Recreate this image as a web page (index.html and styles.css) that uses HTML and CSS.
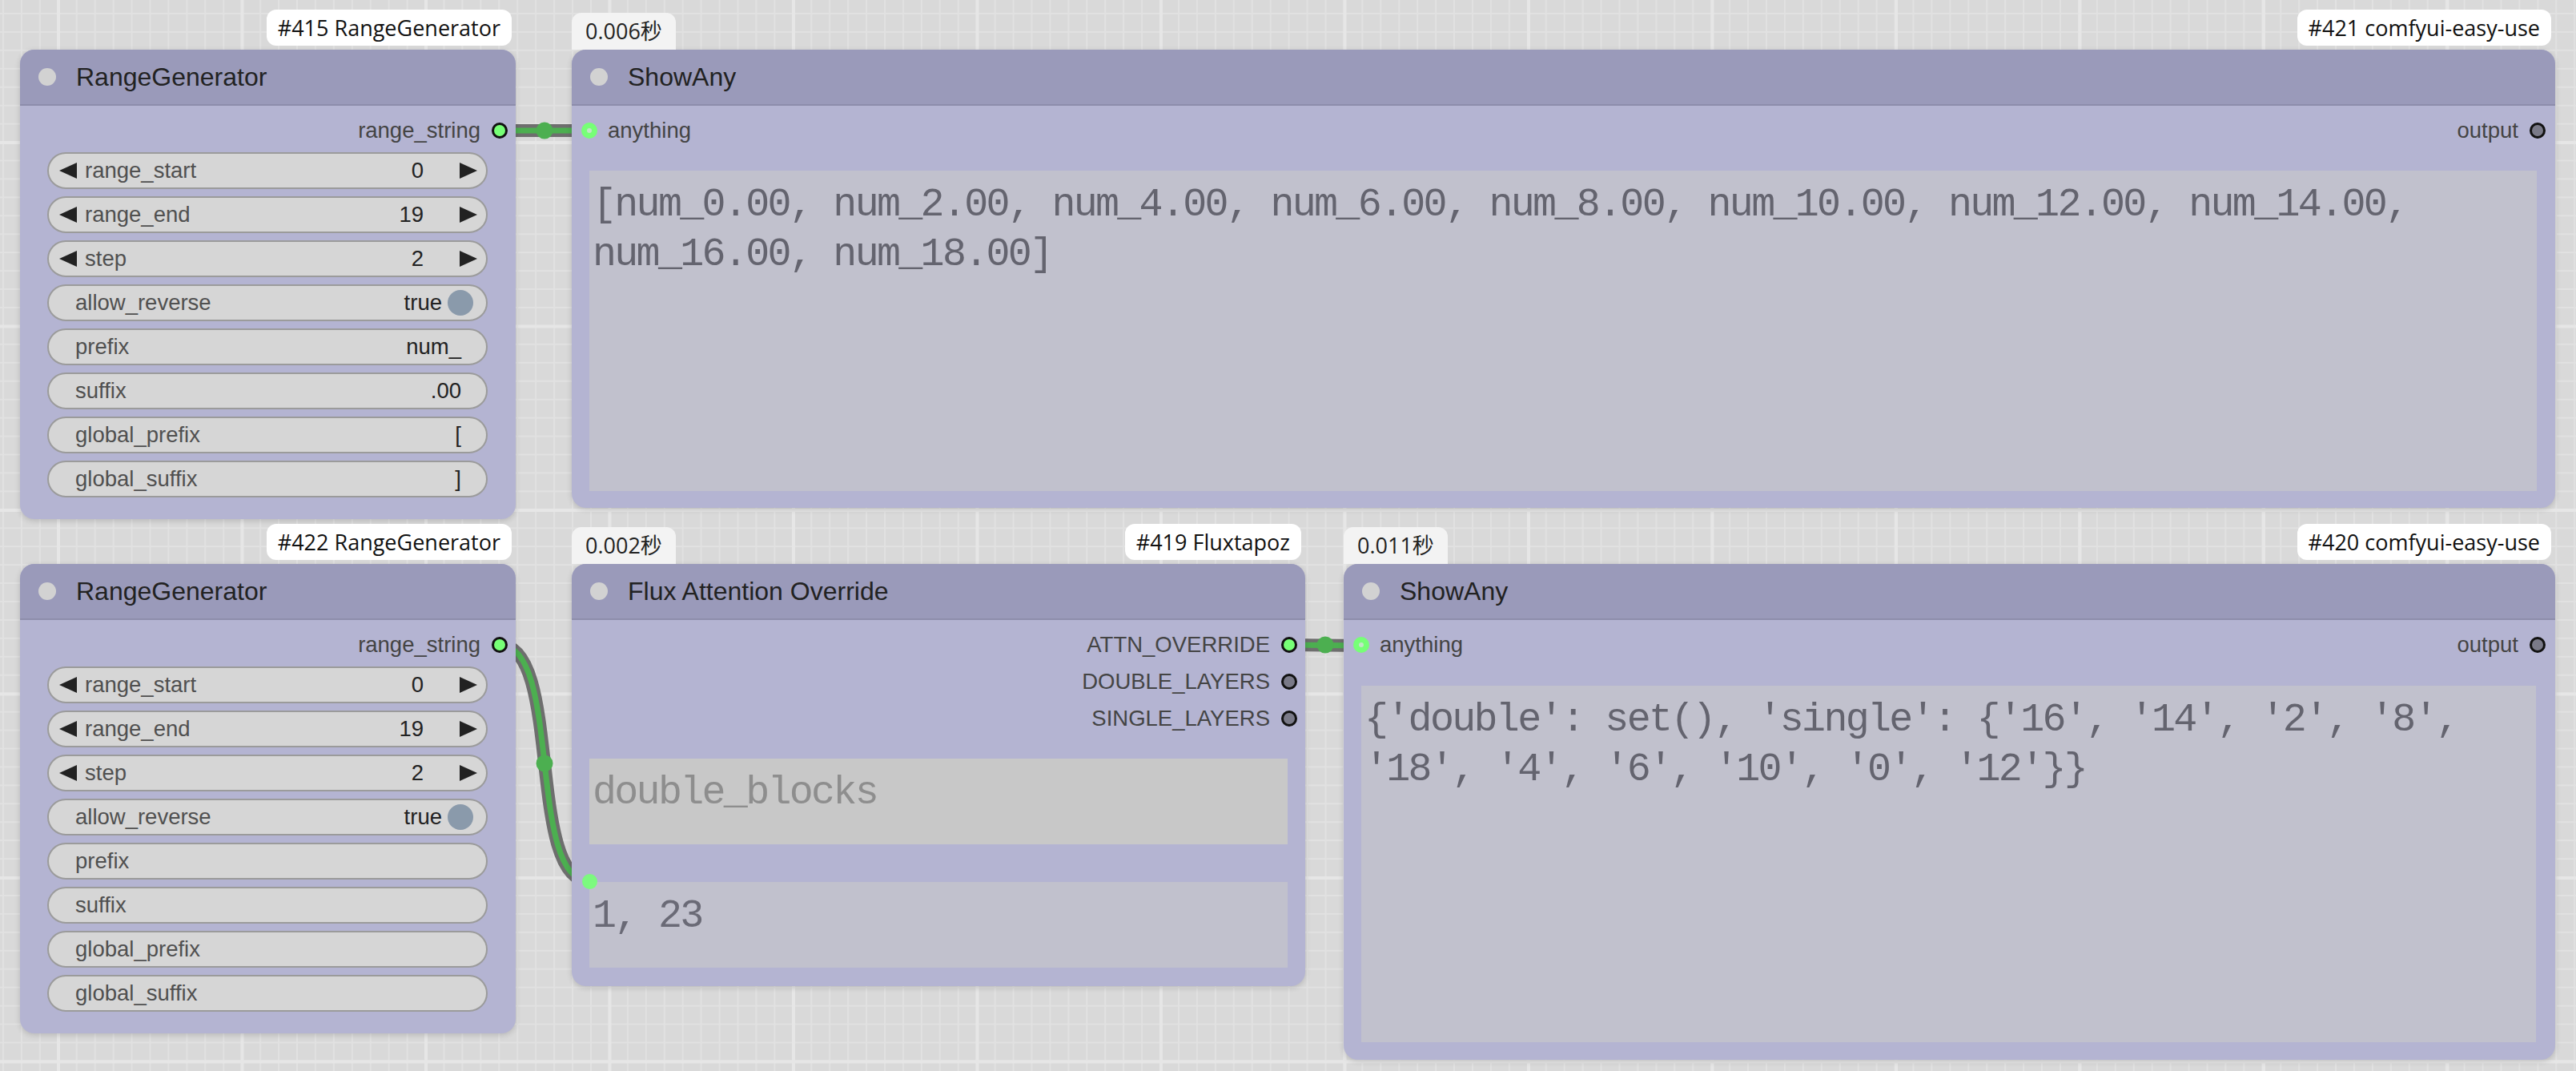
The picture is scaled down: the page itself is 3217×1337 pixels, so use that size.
FILE: index.html
```html
<!DOCTYPE html>
<html lang="en">
<head>
<meta charset="utf-8">
<title>ComfyUI canvas</title>
<link rel="stylesheet" href="styles.css">
</head>
<body>
<div class="canvas">
  <svg class="links" width="3217" height="1337" viewBox="0 0 3217 1337">
    <path class="link-outline" d="M624 163 L736 163"/>
    <path class="link-core" d="M624 163 L736 163"/>
    <circle class="link-dot" cx="680" cy="163" r="10.5"/>
    <path class="link-outline" d="M624 805 C703 805 657 1100 736 1100"/>
    <path class="link-core" d="M624 805 C703 805 657 1100 736 1100"/>
    <circle class="link-dot" cx="680" cy="953" r="10.5"/>
    <path class="link-outline" d="M1610 805 L1700 806"/>
    <path class="link-core" d="M1610 805 L1700 806"/>
    <circle class="link-dot" cx="1655" cy="805" r="10.5"/>
  </svg>

  <div class="node n415">
    <div class="badge id">#415 RangeGenerator</div>
    <div class="title"><span class="tdot"></span><span class="tname">RangeGenerator</span></div>
    <div class="body">
      <div class="slot out"><span class="slabel">range_string</span><i class="pin on"></i></div>
      <div class="widgets">
        <div class="w num"><i class="arr l"></i><span class="wl">range_start</span><span class="wv">0</span><i class="arr r"></i></div>
        <div class="w num"><i class="arr l"></i><span class="wl">range_end</span><span class="wv">19</span><i class="arr r"></i></div>
        <div class="w num"><i class="arr l"></i><span class="wl">step</span><span class="wv">2</span><i class="arr r"></i></div>
        <div class="w tog"><span class="wl">allow_reverse</span><span class="wv">true</span><i class="knob"></i></div>
        <div class="w txt"><span class="wl">prefix</span><span class="wv">num_</span></div>
        <div class="w txt"><span class="wl">suffix</span><span class="wv">.00</span></div>
        <div class="w txt"><span class="wl">global_prefix</span><span class="wv">[</span></div>
        <div class="w txt"><span class="wl">global_suffix</span><span class="wv">]</span></div>
      </div>
    </div>
  </div>

  <div class="node n421">
    <div class="badge time">0.006秒</div>
    <div class="badge id">#421 comfyui-easy-use</div>
    <div class="title"><span class="tdot"></span><span class="tname">ShowAny</span></div>
    <div class="body">
      <div class="slot io">
        <span class="in"><i class="pin ring"></i><span class="slabel">anything</span></span>
        <span class="outp"><span class="slabel">output</span><i class="pin off"></i></span>
      </div>
      <div class="ta show">[num_0.00, num_2.00, num_4.00, num_6.00, num_8.00, num_10.00, num_12.00, num_14.00, num_16.00, num_18.00]</div>
    </div>
  </div>

  <div class="node n422">
    <div class="badge id">#422 RangeGenerator</div>
    <div class="title"><span class="tdot"></span><span class="tname">RangeGenerator</span></div>
    <div class="body">
      <div class="slot out"><span class="slabel">range_string</span><i class="pin on"></i></div>
      <div class="widgets">
        <div class="w num"><i class="arr l"></i><span class="wl">range_start</span><span class="wv">0</span><i class="arr r"></i></div>
        <div class="w num"><i class="arr l"></i><span class="wl">range_end</span><span class="wv">19</span><i class="arr r"></i></div>
        <div class="w num"><i class="arr l"></i><span class="wl">step</span><span class="wv">2</span><i class="arr r"></i></div>
        <div class="w tog"><span class="wl">allow_reverse</span><span class="wv">true</span><i class="knob"></i></div>
        <div class="w txt"><span class="wl">prefix</span><span class="wv"></span></div>
        <div class="w txt"><span class="wl">suffix</span><span class="wv"></span></div>
        <div class="w txt"><span class="wl">global_prefix</span><span class="wv"></span></div>
        <div class="w txt"><span class="wl">global_suffix</span><span class="wv"></span></div>
      </div>
    </div>
  </div>

  <div class="node n419">
    <div class="badge time">0.002秒</div>
    <div class="badge id">#419 Fluxtapoz</div>
    <div class="title"><span class="tdot"></span><span class="tname">Flux Attention Override</span></div>
    <div class="body">
      <div class="slot out"><span class="slabel">ATTN_OVERRIDE</span><i class="pin on"></i></div>
      <div class="slot out"><span class="slabel">DOUBLE_LAYERS</span><i class="pin off"></i></div>
      <div class="slot out"><span class="slabel">SINGLE_LAYERS</span><i class="pin off"></i></div>
      <div class="ta ph first">double_blocks</div>
      <div class="ta second"><i class="wpin"></i>1, 23</div>
    </div>
  </div>

  <div class="node n420">
    <div class="badge time">0.011秒</div>
    <div class="badge id">#420 comfyui-easy-use</div>
    <div class="title"><span class="tdot"></span><span class="tname">ShowAny</span></div>
    <div class="body">
      <div class="slot io">
        <span class="in"><i class="pin ring"></i><span class="slabel">anything</span></span>
        <span class="outp"><span class="slabel">output</span><i class="pin off"></i></span>
      </div>
      <div class="ta show">{'double': set(), 'single': {'16', '14', '2', '8', '18', '4', '6', '10', '0', '12'}}</div>
    </div>
  </div>
</div>
</body>
</html>
```

FILE: styles.css
```css
html, body {
  margin: 0;
  padding: 0;
}

body {
  font-family: "Liberation Sans", Arial, sans-serif;
  background-color: #d9d9d9;
  background-image:
    linear-gradient(90deg, #e6e6e6 4px, transparent 4px),
    linear-gradient(180deg, #e6e6e6 4px, transparent 4px),
    linear-gradient(90deg, #e1e1e1 2px, transparent 2px),
    linear-gradient(180deg, #e1e1e1 2px, transparent 2px);
  background-size: 229.5px 229.5px, 229.5px 229.5px, 22.95px 22.95px, 22.95px 22.95px;
  background-position: 71px 176px, 71px 176px, 3px 16px, 3px 16px;
}

.canvas {
  position: relative;
  width: 3217px;
  height: 1337px;
  overflow: hidden;
}

/* links */
.links {
  position: absolute;
  left: 0;
  top: 0;
}

.link-outline {
  fill: none;
  stroke: #6e6e6e;
  stroke-width: 16;
}

.link-core {
  fill: none;
  stroke: #4caf50;
  stroke-width: 7;
}

.link-dot {
  fill: #4caf50;
}

/* nodes */
.node {
  position: absolute;
  display: flex;
  flex-direction: column;
  background: #b4b4d2;
  border-radius: 18px;
  box-shadow: 0 2px 7px rgba(0, 0, 0, 0.16);
}

.n415 { left: 25px; top: 62px; width: 619px; height: 586px; }
.n422 { left: 25px; top: 704px; width: 619px; height: 586px; }
.n421 { left: 714px; top: 62px; width: 2477px; height: 572px; }
.n419 { left: 714px; top: 704px; width: 916px; height: 527px; }
.n420 { left: 1678px; top: 704px; width: 1513px; height: 619px; }

.title {
  height: 70px;
  box-sizing: border-box;
  border-bottom: 2px solid #8d8dab;
  background: #9a9aba;
  border-radius: 18px 18px 0 0;
  display: flex;
  align-items: center;
  padding-left: 23px;
  flex: none;
}

.tdot {
  width: 22px;
  height: 22px;
  border-radius: 50%;
  background: #d2d2d2;
  flex: none;
}

.tname {
  margin-left: 25px;
  font-size: 32px;
  color: #222;
  white-space: nowrap;
}

.body {
  flex: 1;
  display: flex;
  flex-direction: column;
  padding-top: 8px;
  min-height: 0;
}

/* slots */
.slot {
  height: 46px;
  flex: none;
  display: flex;
  align-items: center;
  font-size: 27.5px;
  color: #444;
  white-space: nowrap;
}

.slot.out {
  justify-content: flex-end;
  padding-right: 10px;
}

.slot.out .pin,
.outp .pin {
  margin-left: 14px;
}

.slot.io {
  justify-content: space-between;
  padding: 0 12px 0 12px;
}

.n421 .slot.io { padding-right: 12px; }

.in, .outp {
  display: flex;
  align-items: center;
}

.in .slabel {
  margin-left: 13px;
}

.pin {
  display: block;
  width: 20px;
  height: 20px;
  box-sizing: border-box;
  border-radius: 50%;
  border: 3px solid #111;
  background: #77ff77;
  flex: none;
}

.pin.off {
  background: #7a7a88;
}

.pin.ring {
  border: 7px solid #77ff77;
  background: #c2e6c6;
}

/* widgets */
.widgets {
  display: flex;
  flex-direction: column;
  gap: 9px;
  margin: 4px 35px 0 34px;
}

.w {
  height: 46px;
  box-sizing: border-box;
  border: 2px solid #9b9b9b;
  border-radius: 23px;
  background: #d6d6d6;
  display: flex;
  align-items: center;
  font-size: 27.5px;
  white-space: nowrap;
}

.wl {
  color: #505050;
  flex: 1;
}

.wv {
  color: #222;
}

.arr {
  display: block;
  width: 0;
  height: 0;
  border-top: 10px solid transparent;
  border-bottom: 10px solid transparent;
  flex: none;
}

.arr.l {
  border-right: 22px solid #222;
  margin-left: 13px;
}

.arr.r {
  border-left: 22px solid #222;
  margin-left: 45px;
  margin-right: 11px;
}

.num .wl {
  margin-left: 10px;
}

.w.txt {
  padding: 0 31px 0 33px;
}

.w.tog {
  padding: 0 16px 0 33px;
}

.knob {
  display: block;
  width: 32px;
  height: 32px;
  border-radius: 50%;
  background: #8a9aab;
  margin-left: 7px;
  flex: none;
}

/* text areas */
.ta {
  position: relative;
  box-sizing: border-box;
  background: #c1c1cd;
  font-family: "Liberation Mono", "DejaVu Sans Mono", monospace;
  font-size: 50px;
  letter-spacing: -2.7px;
  line-height: 62px;
  color: #64646f;
  padding: 12px 4px;
  white-space: pre-wrap;
  overflow: hidden;
}

.n421 .ta.show {
  flex: 1;
  margin: 27px 23px 21px 22px;
}

.n420 .ta.show {
  flex: 1;
  margin: 28px 24px 22px 22px;
}

.n419 .ta {
  height: 107px;
  flex: none;
  margin: 0 22px;
}

.n419 .ta.first {
  margin-top: 27px;
}

.n419 .ta.second {
  margin-top: 47px;
  overflow: visible;
  color: #6a6a76;
}

.ta.ph {
  background: #c8c8c8;
  color: #8e8e8e;
}

.wpin {
  position: absolute;
  left: -9px;
  top: -10px;
  width: 19px;
  height: 19px;
  border-radius: 50%;
  background: #77ff77;
  opacity: 0.92;
}

/* badges */
.badge {
  position: absolute;
  height: 45px;
  line-height: 45px;
  padding: 0 14px;
  font-family: "Open Sans", "Noto Sans CJK SC", sans-serif;
  font-size: 27px;
  color: #111;
  background: #fff;
  border-radius: 12px;
  white-space: nowrap;
}

.badge.id {
  right: 5px;
  bottom: calc(100% + 5px);
}

.badge.time {
  left: 0;
  bottom: 100%;
  height: 46px;
  line-height: 46px;
  padding: 0 17px;
  background: #f3f3f3;
  color: #222;
  border-radius: 12px 12px 0 0;
}
```
